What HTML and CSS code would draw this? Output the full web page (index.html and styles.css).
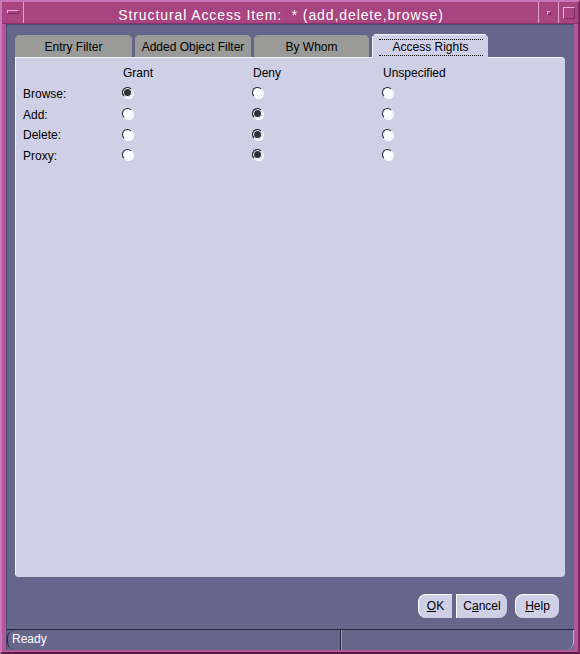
FILE: index.html
```html
<!DOCTYPE html>
<html>
<head>
<meta charset="utf-8">
<link rel="stylesheet" href="styles.css">
</head>
<body>
<div class="window">
  <div class="titlebar">
    <div class="menu-btn"><span class="menu-bar"></span></div>
    <div class="title">Structural Access Item:&nbsp; * (add,delete,browse)</div>
    <div class="min-btn"><span class="min-dot"></span></div>
    <div class="max-btn"><span class="max-box"></span></div>
  </div>
  <div class="client">
    <div class="tabs">
      <div class="tab">Entry Filter</div>
      <div class="tab">Added Object Filter</div>
      <div class="tab">By Whom</div>
      <div class="tab active"><span class="focus">Access Rights</span></div>
    </div>
    <div class="panel">
      <div class="grid">
        <div></div><div>Grant</div><div>Deny</div><div>Unspecified</div>
        <div>Browse:</div><div><span class="radio on"></span></div><div><span class="radio"></span></div><div><span class="radio"></span></div>
        <div>Add:</div><div><span class="radio"></span></div><div><span class="radio on"></span></div><div><span class="radio"></span></div>
        <div>Delete:</div><div><span class="radio"></span></div><div><span class="radio on"></span></div><div><span class="radio"></span></div>
        <div>Proxy:</div><div><span class="radio"></span></div><div><span class="radio on"></span></div><div><span class="radio"></span></div>
      </div>
    </div>
    <div class="buttons">
      <div class="btn ok"><u>O</u>K</div>
      <div class="btn cancel">C<u>a</u>ncel</div>
      <div class="btn help"><u>H</u>elp</div>
    </div>
    <div class="status">
      <div class="status-left">Ready</div>
      <div class="status-right"></div>
    </div>
  </div>
</div>
</body>
</html>
```
FILE: styles.css
```css
* { box-sizing: border-box; }
html, body { margin: 0; padding: 0; }
body {
  width: 580px;
  height: 654px;
  overflow: hidden;
  font-family: "Liberation Sans", Arial, sans-serif;
  font-size: 12px;
  color: #000;
  background: #b4569c;
}
.window {
  width: 580px;
  height: 654px;
  border: 2px solid #c878b8;
  border-right-color: #7a2a60;
  border-bottom-color: #5a1a48;
  background: #b4569c;
  display: flex;
  flex-direction: column;
  padding: 0 4px 3px 4px;
}
.titlebar {
  height: 22px;
  margin: 0 -4px 0 -4px;
  display: flex;
  background: #a8447f;
  border-bottom: 1px solid #8a3070;
}
.menu-btn {
  width: 22px;
  border-right: 1px solid #e0a0d0;
  display: flex;
  align-items: center;
  justify-content: center;
}
.menu-bar {
  width: 12px;
  height: 4px;
  border: 1px solid #e8b0dc;
  border-right-color: #7a2a60;
  border-bottom-color: #7a2a60;
  margin-top: -2px;
}
.title {
  flex: 1;
  text-align: center;
  color: #fff;
  font-family: "Liberation Sans", Arial, sans-serif;
  font-size: 14px;
  letter-spacing: 0.9px;
  line-height: 22px;
  padding-top: 2px;
}
.min-btn, .max-btn {
  width: 20px;
  border-left: 1px solid #e0a0d0;
  display: flex;
  align-items: center;
  justify-content: center;
}
.min-dot {
  width: 4px;
  height: 4px;
  border: 1px solid #e8b0dc;
  border-right-color: #7a2a60;
  border-bottom-color: #7a2a60;
}
.max-box {
  width: 12px;
  height: 12px;
  border: 1px solid #e8b0dc;
  border-right-color: #7a2a60;
  border-bottom-color: #7a2a60;
}
.client {
  flex: 1;
  background: #66668a;
  border-left: 1px solid #4a4a6a;
  border-top: 1px solid #4a4a6a;
  display: flex;
  flex-direction: column;
  padding: 10px 9px 0 8px;
}
.tabs {
  display: flex;
  gap: 3px;
  height: 22px;
  align-items: flex-end;
}
.tab {
  width: 117px;
  height: 22px;
  background: #9a9b98;
  clip-path: polygon(3px 0, calc(100% - 3px) 0, 100% 3px, 100% 100%, 0 100%, 0 3px);
  text-align: center;
  line-height: 25px;
  font-size: 12px;
}
.tab:nth-child(2) { width: 116px; }
.tab:nth-child(3) { width: 115px; }
.tab.active {
  width: 116px;
  height: 24px;
  margin-bottom: -1px;
  background: #cfcfe6;
  border-top: 1px solid #f4f4ff;
  border-left: 1px solid #f4f4ff;
  line-height: 19px;
  padding-top: 3px;
  position: relative;
  z-index: 1;
}
.focus {
  display: inline-block;
  width: 104px;
  border-top: 1px dotted #000;
  border-bottom: 1px dotted #000;
  line-height: 15px;
}
.panel {
  height: 520px;
  background: #cfcfe6;
  border-top: 1px solid #f4f4ff;
  border-left: 1px solid #f4f4ff;
  border-radius: 0 4px 4px 4px;
  padding: 5px 0 0 7px;
}
.grid {
  display: grid;
  grid-template-columns: 100px 130px 130px 1fr;
  grid-auto-rows: 20.67px;
  align-items: center;
}
.grid > div { line-height: 14px; }
.radio {
  display: block;
  width: 11px;
  height: 11px;
  margin-left: -1px;
  margin-top: -2px;
  border-radius: 50%;
  background: #fff;
  border: 1px solid #202030;
  border-right-color: #f0f0ff;
  border-bottom-color: #f0f0ff;
  box-shadow: 1px 1px 0 #ffffff;
}
.radio.on {
  background: #303038;
  box-shadow: inset 0 0 0 1px #ffffff, 1px 1px 0 #ffffff;
}
.buttons {
  display: flex;
  justify-content: flex-end;
  padding-right: 6px;
  margin-top: 17px;
  height: 24px;
}
.btn {
  background: #cfcfe6;
  height: 24px;
  line-height: 23px;
  font-size: 12px;
  text-align: center;
  border-top: 1px solid #ffffff;
  border-left: 1px solid #ffffff;
}
.btn u { text-decoration: underline; }
.ok { width: 34px; border-radius: 8px 0 0 8px; margin-right: 4px; }
.cancel { width: 51px; border-radius: 0 8px 8px 0; margin-right: 8px; }
.help { width: 44px; border-radius: 8px; }
.status {
  margin-top: 11px;
  margin-left: -8px;
  margin-right: -9px;
  height: 21px;
  display: flex;
  border-top: 1px solid #26263a;
}
.status-left {
  width: 334px;
  color: #fff;
  padding-left: 4px;
  line-height: 19px;
  font-size: 12px;
  border-left: 1px solid #26263a;
  border-radius: 8px 0 0 8px;
  border-right: 1px solid #26263a;
}
.status-right {
  flex: 1;
  border-left: 1px solid #9a9ac0;
  border-right: 1px solid #b0b0c8;
  border-radius: 0 0 8px 0;
}
```
